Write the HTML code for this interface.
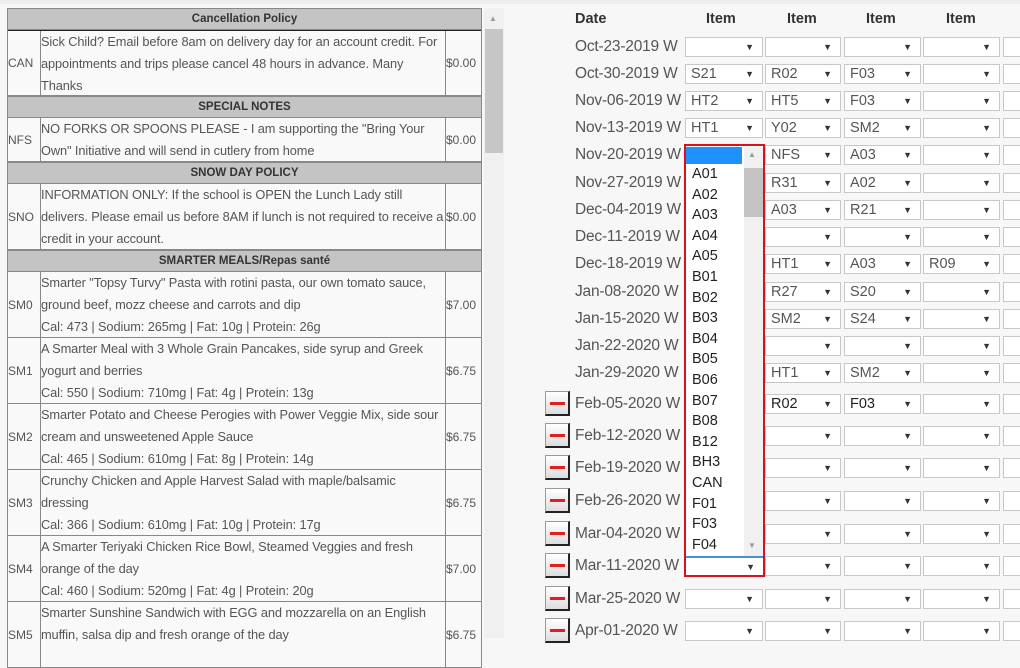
<!DOCTYPE html>
<html><head><meta charset="utf-8"><style>
*{margin:0;padding:0;box-sizing:border-box}
body{width:1020px;height:638px;overflow:hidden;background:#f7f7f7;font-family:"Liberation Sans",Arial,sans-serif;color:#555;position:relative}
.a{position:absolute}
.tbl{position:absolute;left:7px;top:8px;width:475px;border-left:1px solid #888;border-right:1px solid #888}
.hd{height:22px;background:#c4c4c4;border-bottom:1px solid #888;border-top:1px solid #888;text-align:center;font-weight:bold;font-size:11.5px;line-height:20px;color:#333}
.r{display:flex;border-bottom:1px solid #888;background:#f9f9f9;font-size:12.8px;line-height:22px;color:#555}
.r .c{width:33px;display:flex;align-items:center;font-size:12px;border-right:1px solid #888}
.r .d{width:405px;padding-left:0;border-right:1px solid #888;letter-spacing:-0.1px;white-space:nowrap;overflow:hidden}
.r .p{flex:1;display:flex;align-items:center;font-size:12px}
.row{position:absolute;left:575px;height:20px;width:460px}
.dt{position:absolute;left:0;top:0;font-size:15.5px;line-height:20px;color:#555;white-space:nowrap;letter-spacing:-0.2px}
.s{position:absolute;top:0;height:20px;border:1px solid #c8c8c8;background:#fff;font-size:14.5px;line-height:18px;padding-left:5px;color:#555}
.s:after{content:"▼";position:absolute;right:8px;top:0;font-size:9px;color:#333}
.s1{left:110px;width:78px}.s2{left:190px;width:76px}.s3{left:269px;width:77px}.s4{left:348px;width:77px}.s5{left:428px;width:40px}
.m{position:absolute;left:-30px;top:-3px;width:25px;height:25px;background:linear-gradient(#fff,#ddd);border:1px solid #999;border-right:2px solid #222;border-bottom:2px solid #222}
.m:after{content:"";position:absolute;left:4px;top:10px;width:15px;height:3px;background:#e02020}
.th{position:absolute;top:11px;font-weight:bold;font-size:14.5px;color:#333}
</style></head><body>
<div class="a" style="left:0;top:0;width:1020px;height:4px;background:#eee"></div>
<div class="tbl">
<div class="hd">Cancellation Policy</div>
<div class="r" style="height:66px;border-top:1px solid #222"><div class="c">CAN</div><div class="d" style="white-space:normal">Sick Child? Email before 8am on delivery day for an account credit. For appointments and trips please cancel 48 hours in advance. Many Thanks</div><div class="p">$0.00</div></div>
<div class="hd">SPECIAL NOTES</div>
<div class="r" style="height:44px"><div class="c">NFS</div><div class="d" style="white-space:normal">NO FORKS OR SPOONS PLEASE - I am supporting the "Bring Your Own" Initiative and will send in cutlery from home</div><div class="p">$0.00</div></div>
<div class="hd">SNOW DAY POLICY</div>
<div class="r" style="height:66px"><div class="c">SNO</div><div class="d" style="white-space:normal">INFORMATION ONLY: If the school is OPEN the Lunch Lady still delivers. Please email us before 8AM if lunch is not required to receive a credit in your account.</div><div class="p">$0.00</div></div>
<div class="hd">SMARTER MEALS/Repas santé</div>
<div class="r" style="height:66px"><div class="c">SM0</div><div class="d">Smarter "Topsy Turvy" Pasta with rotini pasta, our own tomato sauce,<br>ground beef, mozz cheese and carrots and dip<br>Cal: 473 | Sodium: 265mg | Fat: 10g | Protein: 26g</div><div class="p">$7.00</div></div>
<div class="r" style="height:66px"><div class="c">SM1</div><div class="d">A Smarter Meal with 3 Whole Grain Pancakes, side syrup and Greek<br>yogurt and berries<br>Cal: 550 | Sodium: 710mg | Fat: 4g | Protein: 13g</div><div class="p">$6.75</div></div>
<div class="r" style="height:66px"><div class="c">SM2</div><div class="d">Smarter Potato and Cheese Perogies with Power Veggie Mix, side sour<br>cream and unsweetened Apple Sauce<br>Cal: 465 | Sodium: 610mg | Fat: 8g | Protein: 14g</div><div class="p">$6.75</div></div>
<div class="r" style="height:66px"><div class="c">SM3</div><div class="d">Crunchy Chicken and Apple Harvest Salad with maple/balsamic<br>dressing<br>Cal: 366 | Sodium: 610mg | Fat: 10g | Protein: 17g</div><div class="p">$6.75</div></div>
<div class="r" style="height:66px"><div class="c">SM4</div><div class="d">A Smarter Teriyaki Chicken Rice Bowl, Steamed Veggies and fresh<br>orange of the day<br>Cal: 460 | Sodium: 520mg | Fat: 4g | Protein: 20g</div><div class="p">$7.00</div></div>
<div class="r" style="height:66px"><div class="c">SM5</div><div class="d">Smarter Sunshine Sandwich with EGG and mozzarella on an English<br>muffin, salsa dip and fresh orange of the day</div><div class="p">$6.75</div></div>
</div>
<div class="a" style="left:484px;top:8px;width:20px;height:630px;background:#f0f0f0"></div>
<div class="a" style="left:489px;top:14px;font-size:8px;color:#999">▲</div>
<div class="a" style="left:485px;top:29px;width:18px;height:124px;background:#c6c6c6"></div>

<div class="th" style="left:575px">Date</div>
<div class="th" style="left:706px">Item</div>
<div class="th" style="left:787px">Item</div>
<div class="th" style="left:866px">Item</div>
<div class="th" style="left:946px">Item</div>

<div class="row" style="top:37px"><span class="dt">Oct-23-2019 W</span><div class="s s1"></div><div class="s s2"></div><div class="s s3"></div><div class="s s4"></div><div class="s s5"></div></div>
<div class="row" style="top:64px"><span class="dt">Oct-30-2019 W</span><div class="s s1">S21</div><div class="s s2">R02</div><div class="s s3">F03</div><div class="s s4"></div><div class="s s5"></div></div>
<div class="row" style="top:91px"><span class="dt">Nov-06-2019 W</span><div class="s s1">HT2</div><div class="s s2">HT5</div><div class="s s3">F03</div><div class="s s4"></div><div class="s s5"></div></div>
<div class="row" style="top:118px"><span class="dt">Nov-13-2019 W</span><div class="s s1">HT1</div><div class="s s2">Y02</div><div class="s s3">SM2</div><div class="s s4"></div><div class="s s5"></div></div>
<div class="row" style="top:145px"><span class="dt">Nov-20-2019 W</span><div class="s s2">NFS</div><div class="s s3">A03</div><div class="s s4"></div><div class="s s5"></div></div>
<div class="row" style="top:173px"><span class="dt">Nov-27-2019 W</span><div class="s s2">R31</div><div class="s s3">A02</div><div class="s s4"></div><div class="s s5"></div></div>
<div class="row" style="top:200px"><span class="dt">Dec-04-2019 W</span><div class="s s2">A03</div><div class="s s3">R21</div><div class="s s4"></div><div class="s s5"></div></div>
<div class="row" style="top:227px"><span class="dt">Dec-11-2019 W</span><div class="s s2"></div><div class="s s3"></div><div class="s s4"></div><div class="s s5"></div></div>
<div class="row" style="top:254px"><span class="dt">Dec-18-2019 W</span><div class="s s2">HT1</div><div class="s s3">A03</div><div class="s s4">R09</div><div class="s s5"></div></div>
<div class="row" style="top:282px"><span class="dt">Jan-08-2020 W</span><div class="s s2">R27</div><div class="s s3">S20</div><div class="s s4"></div><div class="s s5"></div></div>
<div class="row" style="top:309px"><span class="dt">Jan-15-2020 W</span><div class="s s2">SM2</div><div class="s s3">S24</div><div class="s s4"></div><div class="s s5"></div></div>
<div class="row" style="top:336px"><span class="dt">Jan-22-2020 W</span><div class="s s2"></div><div class="s s3"></div><div class="s s4"></div><div class="s s5"></div></div>
<div class="row" style="top:363px"><span class="dt">Jan-29-2020 W</span><div class="s s2">HT1</div><div class="s s3">SM2</div><div class="s s4"></div><div class="s s5"></div></div>
<div class="row" style="top:394px"><div class="m"></div><span class="dt">Feb-05-2020 W</span><div class="s s2" style="color:#222">R02</div><div class="s s3" style="color:#222">F03</div><div class="s s4"></div><div class="s s5"></div></div>
<div class="row" style="top:426px"><div class="m"></div><span class="dt">Feb-12-2020 W</span><div class="s s2"></div><div class="s s3"></div><div class="s s4"></div><div class="s s5"></div></div>
<div class="row" style="top:458px"><div class="m"></div><span class="dt">Feb-19-2020 W</span><div class="s s2"></div><div class="s s3"></div><div class="s s4"></div><div class="s s5"></div></div>
<div class="row" style="top:491px"><div class="m"></div><span class="dt">Feb-26-2020 W</span><div class="s s2"></div><div class="s s3"></div><div class="s s4"></div><div class="s s5"></div></div>
<div class="row" style="top:524px"><div class="m"></div><span class="dt">Mar-04-2020 W</span><div class="s s2"></div><div class="s s3"></div><div class="s s4"></div><div class="s s5"></div></div>
<div class="row" style="top:556px"><div class="m"></div><span class="dt">Mar-11-2020 W</span><div class="s s2"></div><div class="s s3"></div><div class="s s4"></div><div class="s s5"></div></div>
<div class="row" style="top:589px"><div class="m"></div><span class="dt">Mar-25-2020 W</span><div class="s s1"></div><div class="s s2"></div><div class="s s3"></div><div class="s s4"></div><div class="s s5"></div></div>
<div class="row" style="top:621px"><div class="m"></div><span class="dt">Apr-01-2020 W</span><div class="s s1"></div><div class="s s2"></div><div class="s s3"></div><div class="s s4"></div><div class="s s5"></div></div>

<div class="a" style="left:684px;top:144px;width:81px;height:433px;border:2px solid #d8121c;background:#fff">
 <div class="a" style="left:0;top:1px;width:56px;height:17px;background:#1e90ff"></div>
 <div class="a" style="left:58px;top:1px;width:19px;height:410px;background:#f0f0f0"></div>
 <div class="a" style="left:62px;top:4px;font-size:8px;color:#999">▲</div>
 <div class="a" style="left:58px;top:22px;width:19px;height:49px;background:#c3c3c3"></div>
 <div class="a" style="left:62px;top:395px;font-size:8px;color:#999">▼</div>
 <div class="a" style="left:6px;top:18px;font-size:14.5px;line-height:20.6px;color:#222">A01<br>A02<br>A03<br>A04<br>A05<br>B01<br>B02<br>B03<br>B04<br>B05<br>B06<br>B07<br>B08<br>B12<br>BH3<br>CAN<br>F01<br>F03<br>F04</div>
 <div class="a" style="left:0;top:410px;width:77px;height:19px;border-top:2px solid #4a90d9;background:#fff"><span class="a" style="right:8px;top:3px;font-size:9px;line-height:12px;color:#333">▼</span></div>
</div>
</body></html>
